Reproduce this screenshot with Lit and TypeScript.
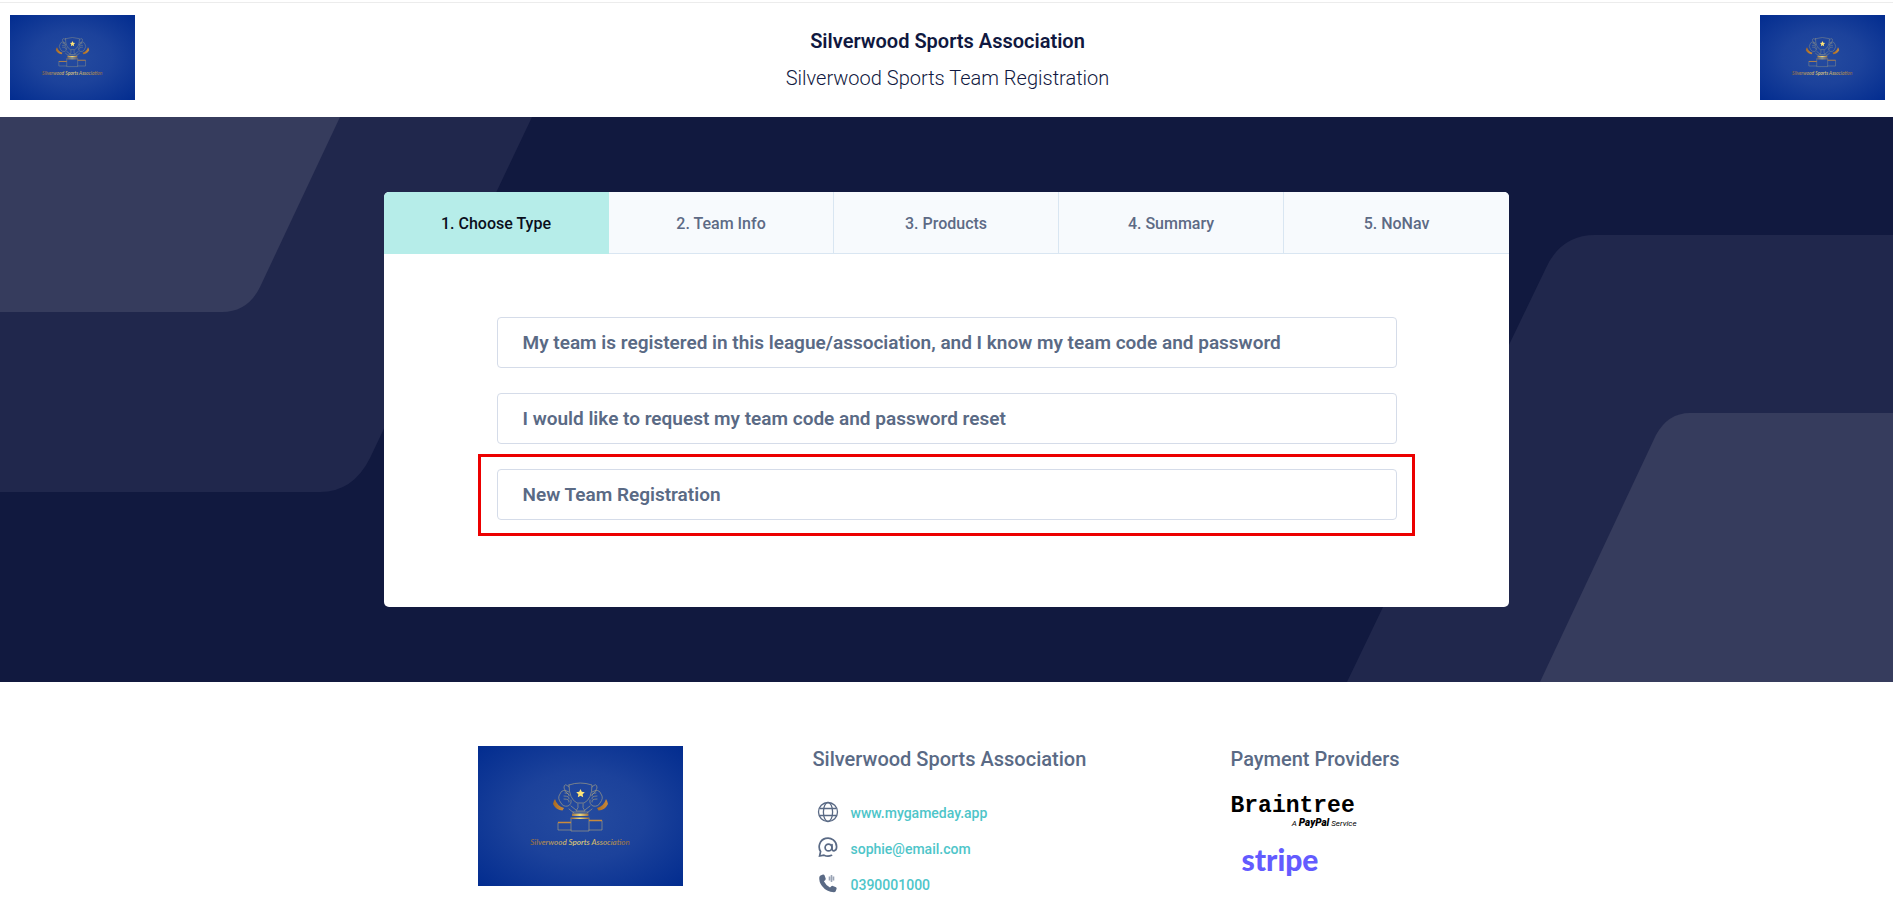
import { LitElement, html, css, svg } from "lit";
import { customElement, property } from "lit/decorators.js";

@customElement("club-badge")
class ClubBadge extends LitElement {
  static styles = css`
    :host { display: block; background: radial-gradient(ellipse at 50% 50%, #254b9f 0%, #1c429b 45%, #022c8f 100%); }
    svg { display: block; width: 100%; height: 100%; }
    .script { font-family: "Lato", cursive, sans-serif; font-style: italic; font-weight: 500; font-size: 8px; }
  `;
  render() {
    return html`<svg viewBox="0 0 205 140" preserveAspectRatio="xMidYMid meet" role="img" aria-label="Silverwood Sports Association logo">
      <defs>
        <linearGradient id="gold" x1="0" x2="1"><stop offset="0" stop-color="#94693f"/><stop offset=".5" stop-color="#f2dc7c"/><stop offset="1" stop-color="#94693f"/></linearGradient>
        <linearGradient id="cuff" x1="0" x2="1"><stop offset="0" stop-color="#a86a22"/><stop offset="1" stop-color="#c98a3c"/></linearGradient>
      </defs>
      <g fill="none" stroke="#9c9a85" stroke-width="0.700" stroke-linejoin="round" stroke-linecap="round">
        <path d="M91 39 Q102 35 114 39 Q114 53 106 57 L99 57 Q91 53 91 39 Z"/>
        <path d="M91 41 Q86 36 86 42 Q87 46 91 49 M114 41 Q119 36 119 42 Q118 46 114 49"/>
        <path d="M91 46 Q84 42 82 48 Q79 52 83 57 Q85 61 90 60 Q94 58 93 54"/>
        <path d="M87 47 q5 0 4 3 M86 50 q6 0 5 3 M86 53 q6 0 5 3"/>
        <path d="M114 46 Q121 42 123 48 Q126 52 122 57 Q120 61 115 60 Q111 58 112 54"/>
        <path d="M118 47 q-5 0 -4 3 M119 50 q-6 0 -5 3 M119 53 q-6 0 -5 3"/>
        <path d="M93 60 l5 4 M112 60 l-5 4 M91 63 l5 4 M114 63 l-5 4"/>
        <path d="M100 58 Q101 62 98 65 H107 Q104 62 105 58 M95 66 H110"/>
        <path d="M93 72 V85 H111 V72 M80 77 V84 H93 M124 75 V84 H111"/>
      </g>
      <path d="M102.500 43 l1.300 2.800 3 .4 -2.200 2.100 .6 3 -2.700 -1.500 -2.700 1.500 .6 -3 -2.200 -2.100 3 -.4z" fill="#ffe477"/>
      <path d="M77 53 Q79 60 86 62 L84.500 64.500 Q78 64 75 58 Q75.500 55 77 53Z" fill="url(#cuff)"/>
      <path d="M128 53 Q126 60 119 62 L120.500 64.500 Q127 64 130 58 Q129.500 55 128 53Z" fill="url(#cuff)"/>
      <path d="M94 67.500 H110.500 V70 H94Z M93 71.500 H111 V73 H93Z" fill="url(#gold)"/>
      <path d="M80 76.500 H93 M111 74.500 H124" stroke="#c98a3c" stroke-width="1.400"/>
      <text class="script" x="102" y="99" text-anchor="middle" fill="url(#gold)">Silverwood Sports Association</text>
    </svg>`;
  }
}

@customElement("step-tabs")
class StepTabs extends LitElement {
  @property({ type: Array }) steps: string[] = [];
  @property({ type: Number }) current = 0;
  static styles = css`
    ol { margin: 0; padding: 0; list-style: none; display: grid; grid-template-columns: repeat(5, 1fr); }
    li { box-sizing: border-box; height: 62px; padding-top: 2px; display: flex; align-items: center; justify-content: center;
      background: #f7fafd; border-bottom: 1px solid #d9e6f2; border-right: 1px solid #d9e6f2;
      color: #5d6a85; font-size: 16px; font-weight: 500; }
    li:last-child { border-right: 0; }
    .active { background: #b6ede9; border-color: #b6ede9; color: #0a0f1c; }
  `;
  render() {
    return html`<ol>${this.steps.map((s, i) => html`
      <li class=${i === this.current ? "active" : ""} aria-current=${i === this.current ? "step" : "false"}>${i + 1}. ${s}</li>`)}</ol>`;
  }
}

const globe = svg`<g fill="none" stroke="#5a6a85" stroke-width="1.300"><circle cx="11" cy="11" r="9.500"/><ellipse cx="11" cy="11" rx="4.600" ry="9.500"/><path d="M2.500 7.500H19.500M2.500 14.500H19.500"/></g>`;
const at = svg`<g fill="none" stroke="#5a6a85" stroke-width="1.700" stroke-linecap="round"><circle cx="11.500" cy="10.500" r="3.400"/><path d="M15 7.500V11.500Q15.200 14 17 13.800Q19.600 13.300 19.600 10A8.700 8.700 0 1 0 3.600 14.500L2.600 19L7 18.200M7 18.200Q11 20 14.500 18.300"/></g>`;
const phone = svg`<path d="M3.500 2.500 6 1.500Q7 1.300 7.500 2.300L8.700 5.600Q8.900 6.500 8.200 7.200L6.900 8.300Q9 12.500 13 14.600L14.300 13.200Q15 12.500 15.900 12.900L19 14.300Q19.900 14.900 19.600 15.800L18.700 18.200Q18.200 19.300 16.900 19.300Q9.500 19 5 13Q1.700 8.500 2.300 4.200Q2.500 3 3.500 2.500Z" fill="#5a6a85"/><path d="M12.500 3.500V7.500M14.500 2V9M16.500 3.500V7.500" stroke="#9aa4b5" stroke-width="1.600" fill="none"/>`;

@customElement("app-root")
class AppRoot extends LitElement {
  private steps = ["Choose Type", "Team Info", "Products", "Summary", "NoNav"];
  private options = [
    { label: "My team is registered in this league/association, and I know my team code and password", marked: false },
    { label: "I would like to request my team code and password reset", marked: false },
    { label: "New Team Registration", marked: true },
  ];
  private contacts = [
    { icon: globe, text: "www.mygameday.app", href: "#site" },
    { icon: at, text: "sophie@email.com", href: "mailto:sophie@email.com" },
    { icon: phone, text: "0390001000", href: "tel:0390001000" },
  ];
  static styles = css`
    :host { display: block; background: #fff; font-family: "Roboto", "Liberation Sans", sans-serif; color: #101840; }
    .strip { height: 2px; border-bottom: 1px solid #ececec; }
    header { display: flex; justify-content: space-between; align-items: flex-start; padding: 12px 8px 17px 10px; }
    header club-badge { width: 125px; height: 85px; }
    .titles { text-align: center; padding-top: 8px; }
    h1, h2, p { margin: 0; }
    h1 { font-size: 20px; line-height: 37px; font-weight: 600; color: #101840; }
    .sub { font-size: 20px; line-height: 37px; font-weight: 300; }
    .stage { position: relative; padding: 75px 0; background: #11193f; overflow: hidden; }
    .shape { position: absolute; top: 0; height: 100%; }
    .left { left: 0; }
    .right { right: 0; }
    .card { position: relative; box-sizing: border-box; width: 1125px; max-width: 100%; margin: 0 auto; background: #fff; border-radius: 5px; overflow: hidden; }
    .options { display: flex; flex-direction: column; gap: 25px; padding: 63px 10% 87px; }
    .option { position: relative; }
    .marked::after { content: ""; position: absolute; inset: -15px -18px -16px -19px; border: 3px solid #ec0000; pointer-events: none; }
    button { box-sizing: border-box; width: 100%; height: 51px; padding: 0 25px; text-align: left; background: #fff;
      border: 1px solid #d5dce9; border-radius: 4px; color: #5a6a85; font-family: inherit; font-size: 19px; font-weight: 600; }
    footer { box-sizing: border-box; display: grid; grid-template-columns: 335fr 418fr 185fr; width: 938px; max-width: 100%; margin: 0 auto; padding-top: 64px; }
    footer club-badge { width: 205px; height: 140px; }
    h2 { font-size: 20px; line-height: 26px; font-weight: 500; color: #5a6a85; }
    ul { list-style: none; margin: 0; padding: 22px 0 0 4px; }
    li { display: flex; align-items: center; gap: 12px; height: 36px; font-size: 14px; font-weight: 500; }
    li svg { width: 22px; height: 22px; }
    a { color: #4ec5c9; text-decoration: none; padding-top: 1px; }
    .pay { padding-top: 22px; color: #000; }
    .braintree { width: 126px; font-family: "Liberation Mono", monospace; font-weight: 700; font-size: 23px; line-height: 24px; }
    .paypal { width: 126px; text-align: right; font-size: 8px; line-height: 10px; font-style: italic; }
    .paypal b { font-size: 10px; font-weight: 900; }
    .stripe { padding: 12px 0 0 11px; font-family: "Lato", sans-serif; font-weight: 900; font-size: 30px; line-height: 36px; color: #635bff; }
  `;
  render() {
    return html`
      <div class="strip"></div>
      <header>
        <club-badge></club-badge>
        <div class="titles">
          <h1>Silverwood Sports Association</h1>
          <p class="sub">Silverwood Sports Team Registration</p>
        </div>
        <club-badge></club-badge>
      </header>
      <main class="stage">
        <svg class="shape left" viewBox="0 0 540 565" preserveAspectRatio="xMinYMin meet" aria-hidden="true">
          <path d="M0 0H532L370 341Q353 375 320 375H0Z" fill="#20274c"/>
          <path d="M0 0H340L260 170Q248 195 222 195H0Z" fill="#363c5d"/>
        </svg>
        <svg class="shape right" viewBox="0 0 550 565" preserveAspectRatio="xMaxYMin meet" aria-hidden="true">
          <path d="M550 118H252Q218 118 203 151L4 565H550Z" fill="#20274c"/>
          <path d="M550 296H347Q325 296 313 318L197 565H550Z" fill="#363c5d"/>
        </svg>
        <section class="card">
          <step-tabs .steps=${this.steps} .current=${0}></step-tabs>
          <div class="options">
            ${this.options.map((o) => html`<div class="option ${o.marked ? "marked" : ""}"><button type="button">${o.label}</button></div>`)}
          </div>
        </section>
      </main>
      <footer>
        <club-badge></club-badge>
        <section>
          <h2>Silverwood Sports Association</h2>
          <ul>${this.contacts.map((c) => html`<li><svg viewBox="0 0 22 22" aria-hidden="true">${c.icon}</svg><a href=${c.href}>${c.text}</a></li>`)}</ul>
        </section>
        <section>
          <h2>Payment Providers</h2>
          <div class="pay">
            <div class="braintree">Braintree</div>
            <div class="paypal">A <b>PayPal</b> Service</div>
            <div class="stripe">stripe</div>
          </div>
        </section>
      </footer>`;
  }
}
